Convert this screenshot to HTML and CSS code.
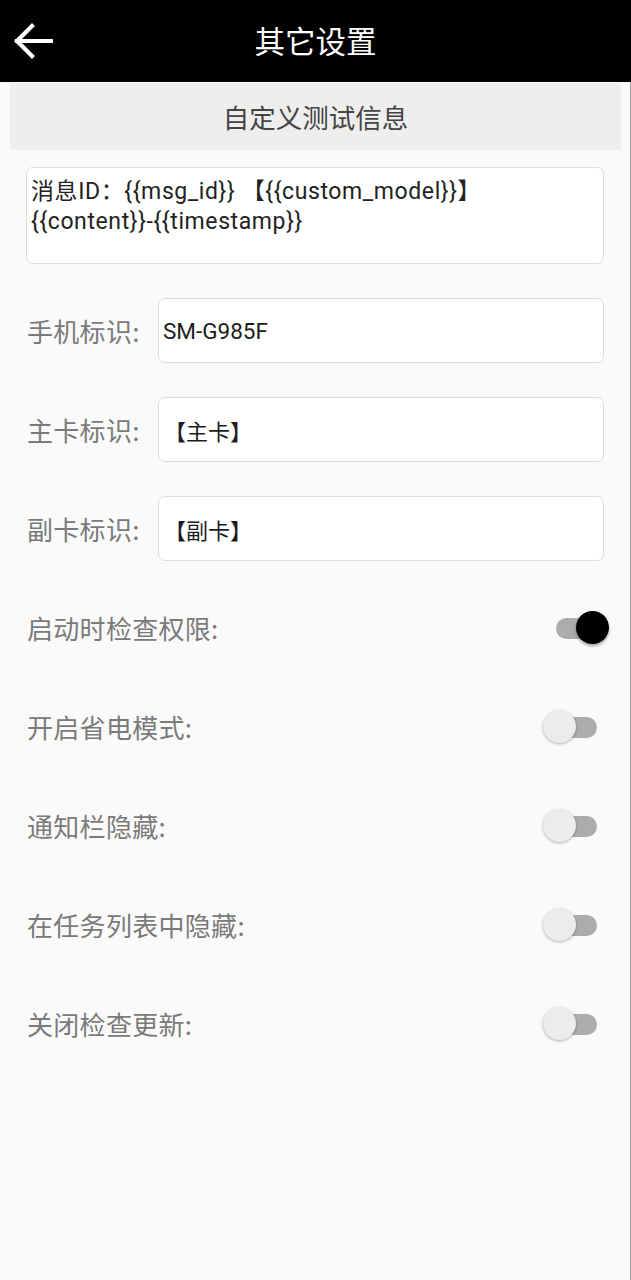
FILE: index.html
```html
<!DOCTYPE html>
<html lang="zh">
<head>
<meta charset="utf-8">
<title>其它设置</title>
<link rel="stylesheet" href="styles.css">
</head>
<body>
<div class="app">
  <header class="topbar">
    <button class="back" aria-label="返回">
      <svg width="40" height="36" viewBox="0 0 40 36"><path d="M38 18H4M19 3L4 18l15 15" fill="none" stroke="#fff" stroke-width="4.2" stroke-linecap="square" stroke-linejoin="miter"/></svg>
    </button>
    <h1 class="title">其它设置</h1>
  </header>
  <main class="content">
    <div class="section-head">自定义测试信息</div>
    <div class="textbox">消息ID：{{msg_id}} 【{{custom_model}}】<br>{{content}}-{{timestamp}}</div>
    <div class="row">
      <span class="label">手机标识:</span>
      <div class="input">SM-G985F</div>
    </div>
    <div class="row">
      <span class="label">主卡标识:</span>
      <div class="input cjk">【主卡】</div>
    </div>
    <div class="row">
      <span class="label">副卡标识:</span>
      <div class="input cjk">【副卡】</div>
    </div>
    <div class="row">
      <span class="label">启动时检查权限:</span>
      <span class="switch on"><span class="track"></span><span class="thumb"></span></span>
    </div>
    <div class="row">
      <span class="label">开启省电模式:</span>
      <span class="switch"><span class="track"></span><span class="thumb"></span></span>
    </div>
    <div class="row">
      <span class="label">通知栏隐藏:</span>
      <span class="switch"><span class="track"></span><span class="thumb"></span></span>
    </div>
    <div class="row">
      <span class="label">在任务列表中隐藏:</span>
      <span class="switch"><span class="track"></span><span class="thumb"></span></span>
    </div>
    <div class="row">
      <span class="label">关闭检查更新:</span>
      <span class="switch"><span class="track"></span><span class="thumb"></span></span>
    </div>
  </main>
</div>
</body>
</html>
```

FILE: styles.css
```css
html, body {
  margin: 0;
  padding: 0;
  height: 100%;
}
body {
  background: #fafafa;
  font-family: Roboto, "Noto Sans CJK SC", sans-serif;
}
.app {
  min-height: 1280px;
  display: flex;
  flex-direction: column;
}
.topbar {
  height: 82px;
  background: #000;
  display: flex;
  align-items: center;
  justify-content: center;
  position: relative;
  flex: none;
}
.back {
  position: absolute;
  left: 13px;
  top: 23px;
  padding: 0;
  margin: 0;
  border: 0;
  background: none;
  width: 40px;
  height: 36px;
}
.back svg { display: block; }
.title {
  margin: 0;
  color: #fff;
  font-size: 30.5px;
  font-weight: 400;
  font-family: "Noto Sans CJK SC", sans-serif;
  line-height: 1;
  padding-bottom: 2px;
}
.content {
  flex: 1;
  border-right: 1px solid #a0a0a0;
  display: flex;
  flex-direction: column;
  gap: 34px;
  padding-bottom: 40px;
}
.section-head {
  margin: 1px 9px 0 10px;
  height: 67px;
  background: #eeeeee;
  color: #444;
  font-size: 26.5px;
  font-family: "Noto Sans CJK SC", sans-serif;
  display: flex;
  align-items: center;
  justify-content: center;
  margin-bottom: -17px;
}
.textbox {
  margin: 0 26px 0 26px;
  height: 97px;
  box-sizing: border-box;
  background: #fff;
  border: 1.5px solid #dcdcdc;
  border-radius: 7px;
  padding: 9px 4px 0 4px;
  font-size: 23px;
  line-height: 30px;
  letter-spacing: 0.6px;
  color: #222;
}
.row {
  height: 65px;
  display: flex;
  align-items: center;
  padding: 0 26px 0 27px;
}
.label {
  width: 131px;
  flex: none;
  font-size: 26px;
  letter-spacing: 0.3px;
  color: #7a7a7a;
  font-family: "Noto Sans CJK SC", sans-serif;
  white-space: nowrap;
}
.input {
  flex: 1;
  height: 65px;
  box-sizing: border-box;
  background: #fff;
  border: 1.5px solid #dcdcdc;
  border-radius: 7px;
  display: flex;
  align-items: center;
  padding: 0 4px;
  font-size: 22.5px;
  color: #1c1c1c;
}
.input.cjk {
  font-family: "Noto Sans CJK SC", sans-serif;
  font-size: 22px;
  padding-left: 5px;
}
.switch {
  margin-left: auto;
  margin-right: -5px;
  width: 66px;
  height: 34px;
  position: relative;
  flex: none;
}
.track {
  position: absolute;
  left: 13px;
  right: 12px;
  top: 7px;
  height: 21px;
  border-radius: 11px;
  background: #acacac;
}
.thumb {
  position: absolute;
  left: 0;
  top: 0;
  width: 33px;
  height: 33px;
  border-radius: 50%;
  background: #ececec;
  box-shadow: 0 1px 3px rgba(0,0,0,0.3);
}
.switch.on .thumb {
  left: auto;
  right: 0;
  background: #000;
  box-shadow: 0 2px 3px rgba(0,0,0,0.35);
}
```
